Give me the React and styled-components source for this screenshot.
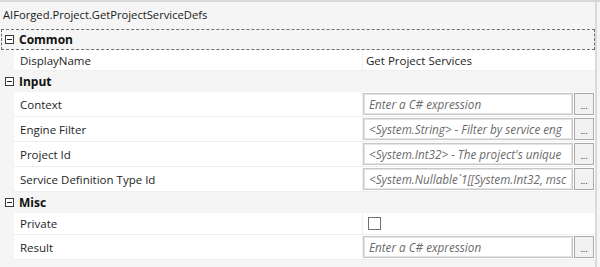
import React from 'react';
import styled, { createGlobalStyle } from 'styled-components';

const GlobalStyle = createGlobalStyle`
  html, body {
    margin: 0;
    padding: 0;
    background: #f4f5f4;
  }
  * { box-sizing: border-box; }
`;

const Frame = styled.div`
  width: 600px;
  height: 267px;
  display: flex;
  border-top: 2px solid #d7d8d7;
  background: #f4f5f4;
  font-family: "Segoe UI", "Open Sans", "Noto Sans", sans-serif;
  font-size: 11.5px;
  color: #1e1e1e;
  overflow: hidden;
`;

const Main = styled.div`
  width: 595px;
  display: flex;
  flex-direction: column;
`;

const Edge = styled.div`
  width: 2px;
  background: #d9dad9;
`;

const Title = styled.div`
  height: 27px;
  padding: 5px 0 0 3px;
  font-size: 11.2px;
  color: #1a1a1a;
`;

const Category = styled.div`
  height: 21px;
  display: flex;
  align-items: center;
  gap: 5px;
  padding-left: 4px;
  border: 1px dashed ${({ $focused }) => ($focused ? '#6f6f6f' : 'transparent')};
  margin-left: ${({ $focused }) => ($focused ? '1px' : '0')};
  font-weight: 700;
  font-size: 12px;
  color: #111;
`;

const Toggle = styled.span`
  width: 9px;
  height: 9px;
  border: 1px solid #3a3a3a;
  background: #fff;
  display: flex;
  align-items: center;
  justify-content: center;
  flex-shrink: 0;
  margin-left: ${({ $focused }) => ($focused ? '-1px' : '0')};

  &::after {
    content: '';
    width: 5px;
    height: 1px;
    background: #222;
  }
`;

const Row = styled.div`
  height: ${({ $h }) => $h}px;
  display: grid;
  grid-template-columns: 14px 348px 1fr;
`;

const Gutter = styled.div``;

const Label = styled.div`
  background: #fff;
  border-bottom: 1px solid #eeefee;
  padding-left: 6px;
  display: flex;
  align-items: center;
  white-space: nowrap;
`;

const Value = styled.div`
  background: #fff;
  border-bottom: 1px solid #eeefee;
  border-left: 1px solid #f0f0f0;
  display: flex;
  align-items: center;
  padding-right: 1px;
  white-space: nowrap;
`;

const PlainValue = styled.span`
  padding-left: 3px;
`;

const Expr = styled.div`
  width: 210px;
  height: 22px;
  flex-shrink: 0;
  border: 1px solid #c6c7c6;
  box-shadow: inset 0 0 0 1px #e4e4e4;
  background: #fff;
  display: flex;
  align-items: center;
  padding: 0 5px;
  overflow: hidden;
  font-style: italic;
  font-size: 11.7px;
  color: #6b6b6b;
`;

const Dots = styled.button`
  width: 20px;
  height: 22px;
  margin-left: 1px;
  flex-shrink: 0;
  border: 1px solid #a9a9a9;
  background: #f2f2f2;
  padding: 0 0 2px;
  font: 9px "Segoe UI", "Open Sans", sans-serif;
  color: #222;
  display: flex;
  align-items: flex-end;
  justify-content: center;
`;

const Check = styled.span`
  width: 13px;
  height: 13px;
  border: 1px solid #707070;
  background: #fff;
  margin-left: 5px;
`;

const CategoryHeader = ({ name, focused }) => (
  <Category $focused={focused}>
    <Toggle $focused={focused} />
    {name}
  </Category>
);

const ExprRow = ({ label, hint }) => (
  <Row $h={25}>
    <Gutter />
    <Label>{label}</Label>
    <Value>
      <Expr>{hint}</Expr>
      <Dots>...</Dots>
    </Value>
  </Row>
);

export default function App() {
  return (
    <>
      <GlobalStyle />
      <Frame>
        <Main>
          <Title>AIForged.Project.GetProjectServiceDefs</Title>

          <CategoryHeader name="Common" focused />
          <Row $h={21}>
            <Gutter />
            <Label>DisplayName</Label>
            <Value><PlainValue>Get Project Services</PlainValue></Value>
          </Row>

          <CategoryHeader name="Input" />
          <ExprRow label="Context" hint="Enter a C# expression" />
          <ExprRow label="Engine Filter" hint="<System.String> - Filter by service eng" />
          <ExprRow label="Project Id" hint="<System.Int32> - The project's unique" />
          <ExprRow label="Service Definition Type Id" hint="<System.Nullable`1[[System.Int32, msc" />

          <CategoryHeader name="Misc" />
          <Row $h={22}>
            <Gutter />
            <Label>Private</Label>
            <Value><Check /></Value>
          </Row>
          <ExprRow label="Result" hint="Enter a C# expression" />
        </Main>
        <Edge />
      </Frame>
    </>
  );
}
